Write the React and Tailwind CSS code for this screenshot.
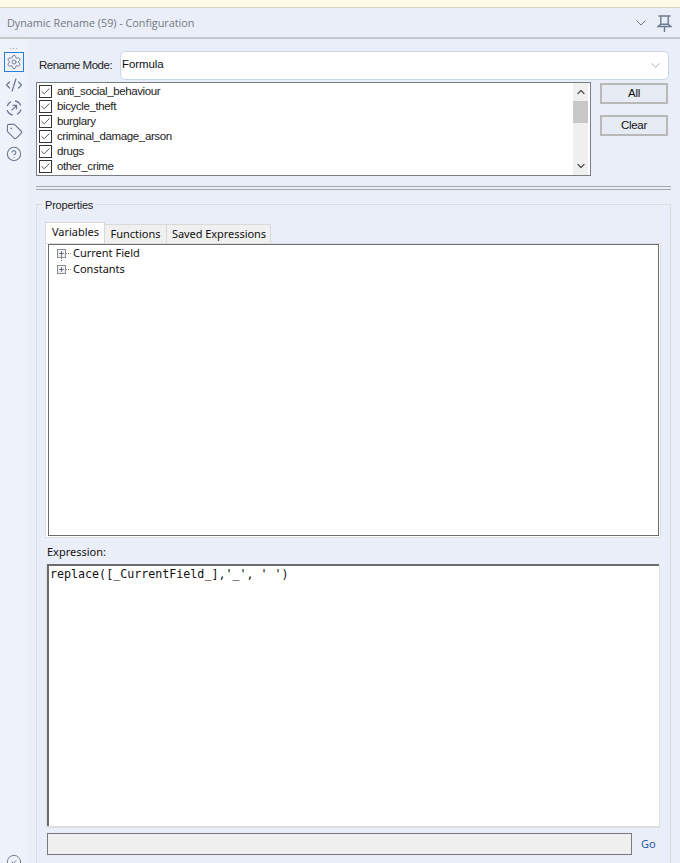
import React from 'react';
import { Settings, CodeXml, Tag, CircleHelp, CircleCheck, ChevronDown, ChevronUp, Check, Plus } from 'lucide-react';

const fields = ['anti_social_behaviour', 'bicycle_theft', 'burglary', 'criminal_damage_arson', 'drugs', 'other_crime'];

function PinIcon() {
  return (
    <svg width="15" height="17" viewBox="0 0 15 17" fill="none" stroke="#6b7a90" strokeWidth="1.4">
      <path d="M1.5 1h12M3.8 1v8.2M11.2 1v8.2M1 11.5l2.8-2.3h7.4l2.8 2.3zM7.5 11.5v5.5" />
    </svg>
  );
}

function ConnectIcon() {
  return (
    <svg width="16" height="16" viewBox="0 0 16 16" fill="none" stroke="#6b7a90" strokeWidth="1.3">
      <path d="M1.2 6.2A7 7 0 0 1 5 1.6M9 1A7 7 0 0 1 14.6 5.6M14.9 9.5A7 7 0 0 1 11 14.3M6.8 15A7 7 0 0 1 1.2 10" />
      <path d="M5.6 10.4L10.4 5.6M6.6 5.4h3.9v3.9" />
    </svg>
  );
}

function TreeRow({ label, dotted }) {
  return (
    <div className="relative flex h-[16px] items-center pl-[8px]">
      {dotted && <span className="absolute left-[12px] top-[-7px] h-[7px] border-l border-dotted border-[#777]" />}
      <span className="flex h-[9px] w-[9px] items-center justify-center border border-[#8e8f8f] bg-[#eef0f4]">
        <Plus size={7} strokeWidth={2} color="#223" />
      </span>
      <span className="w-[5px] border-t border-dotted border-[#888]" />
      <span className="ml-[2px]">{label}</span>
    </div>
  );
}

export default function App() {
  return (
    <div className="flex h-[863px] w-[680px] flex-col overflow-hidden bg-[#e9eef8] font-['Noto_Sans',sans-serif] text-[11px] text-[#111]">
      <div className="h-[7px] shrink-0 border-b border-[#d4d2c4] bg-[#fefbe6] box-content" />

      <div className="flex h-[31px] shrink-0 items-center justify-between border-b-2 border-[#c4c7cc] pl-[7px] pr-[8px] pt-[1px]">
        <span className="font-['Open_Sans',sans-serif] text-[10.8px] text-[#74787f]">Dynamic Rename (59) - Configuration</span>
        <div className="flex items-center gap-[8px]">
          <ChevronDown size={16} strokeWidth={1.5} color="#6b7a90" />
          <PinIcon />
        </div>
      </div>

      <div className="flex min-h-0 flex-1">
        <div className="flex w-[28px] shrink-0 flex-col items-center bg-[#eef2fb]">
          <div className="mt-[3px] h-[9px] text-[7px] leading-[9px] tracking-[1px] text-[#8a8f98]">...</div>
          <div className="mt-[1px] flex h-[20px] w-[20px] items-center justify-center border border-[#2a7fd0]">
            <Settings size={16} strokeWidth={1.4} color="#6b7a90" />
          </div>
          <div className="mt-[4px] flex h-[17px] items-center">
            <CodeXml size={18} strokeWidth={1.7} color="#6b7a90" />
          </div>
          <div className="mt-[7px] flex h-[16px] items-center">
            <ConnectIcon />
          </div>
          <div className="mt-[7px] flex h-[17px] items-center">
            <Tag size={17} strokeWidth={1.6} color="#6b7a90" />
          </div>
          <div className="mt-[5px] flex h-[17px] items-center">
            <CircleHelp size={16} strokeWidth={1.6} color="#6b7a90" />
          </div>
          <div className="mt-auto mb-[-7px]">
            <CircleCheck size={16} strokeWidth={1.4} color="#6b7a90" />
          </div>
        </div>

        <div className="min-w-0 flex-1 pl-[8px] pr-[9px] pt-[12px]">
          <div className="flex h-[29px] items-center pr-[2px]">
            <span className="ml-[3px] w-[81px] whitespace-nowrap font-['Liberation_Sans',sans-serif] text-[11.5px] tracking-[-0.45px] text-[#222]">Rename Mode:</span>
            <div className="flex h-[29px] flex-1 items-center justify-between rounded-[5px] border border-[#c9d6ea] bg-white pl-[1px] pr-[5px]">
              <span className="font-['Liberation_Sans',sans-serif] text-[11.5px] tracking-[-0.1px] -mt-[2px]">Formula</span>
              <ChevronDown size={15} strokeWidth={1.4} color="#9aa5b5" />
            </div>
          </div>

          <div className="mt-[2px] flex items-start">
            <div className="flex h-[94px] w-[555px] border border-[#7a7d82] bg-white">
              <div className="min-w-0 flex-1 pl-[2px] pt-[1px]">
                {fields.map((field) => (
                  <div key={field} className="flex h-[15px] items-center gap-[5px] font-['Liberation_Sans',sans-serif] text-[11.5px] tracking-[-0.38px] text-[#222]">
                    <span className="flex h-[13px] w-[13px] shrink-0 items-center justify-center border border-[#333] bg-white">
                      <Check size={11} strokeWidth={1.8} color="#333" />
                    </span>
                    {field}
                  </div>
                ))}
              </div>
              <div className="mr-[2px] flex w-[15px] flex-col items-center bg-[#f0f0f0]">
                <div className="flex h-[18px] items-center">
                  <ChevronUp size={12} strokeWidth={2.6} color="#555" />
                </div>
                <div className="h-[22px] w-full bg-[#c8c8c8]" />
                <div className="flex-1" />
                <div className="flex h-[18px] items-center">
                  <ChevronDown size={12} strokeWidth={2.6} color="#555" />
                </div>
              </div>
            </div>
            <div className="ml-[9px] flex w-[68px] flex-col gap-[11px] pt-[1px]">
              <button className="h-[21px] border-2 border-[#b8b8b8] bg-[#e7ebf4] font-['Liberation_Sans',sans-serif] text-[11.5px] tracking-[-0.3px] text-[#111]">All</button>
              <button className="h-[21px] border-2 border-[#b8b8b8] bg-[#e7ebf4] font-['Liberation_Sans',sans-serif] text-[11.5px] tracking-[-0.3px] text-[#111]">Clear</button>
            </div>
          </div>

          <div className="mt-[10px] h-[4px] border-y border-[#a9a9a9]" />

          <div className="relative mt-[14px] h-[700px] border border-[#dcdcdc] px-[8px] pt-[17px]">
            <span className="absolute left-[5px] top-[-7px] bg-[#e9eef8] px-[3px] font-['Liberation_Sans',sans-serif] text-[11px] leading-[14px] tracking-[-0.2px] text-[#222]">Properties</span>

            <div className="flex h-[21px] items-end">
              <div className="z-10 flex h-[21px] w-[60px] items-center justify-center border border-b-0 border-[#d9d9d9] bg-white pb-[2px] pl-[1px]">Variables</div>
              <div className="flex h-[19px] w-[62px] items-center justify-center border-t border-r border-[#d9d9d9] bg-[#f0f0f0]">Functions</div>
              <div className="flex h-[19px] w-[104px] items-center justify-center border-t border-r border-[#d9d9d9] bg-[#f0f0f0] pl-[1px] tracking-[-0.05px]">Saved Expressions</div>
            </div>

            <div className="w-[616px] border border-[#dedede] bg-white pb-[1px] pl-[2px] pr-[1px] pt-[0px]">
              <div className="h-[292px] w-[611px] border border-[#6d6d6d]">
                <TreeRow label="Current Field" />
                <TreeRow label="Constants" dotted />
              </div>
            </div>

            <div className="h-[26px] pl-[2px] pt-[5px] leading-[18px]">Expression:</div>

            <div className="ml-[2px] h-[262px] w-[612px] border-2 border-b-0 border-r-0 border-[#6d6d6d] bg-white pl-[1px] pt-[1px] font-['DejaVu_Sans_Mono',monospace] text-[11.67px] leading-[14px] shadow-[0_1px_0_1px_#dedede]">
              replace([_CurrentField_],'_', ' ')
            </div>

            <div className="mt-[7px] flex items-center">
              <div className="ml-[2px] h-[22px] w-[585px] border border-[#7a7a7a] bg-[#f0f0f0]" />
              <span className="ml-[9px] text-[#2a55a5]">Go</span>
            </div>
          </div>
        </div>
      </div>
    </div>
  );
}
